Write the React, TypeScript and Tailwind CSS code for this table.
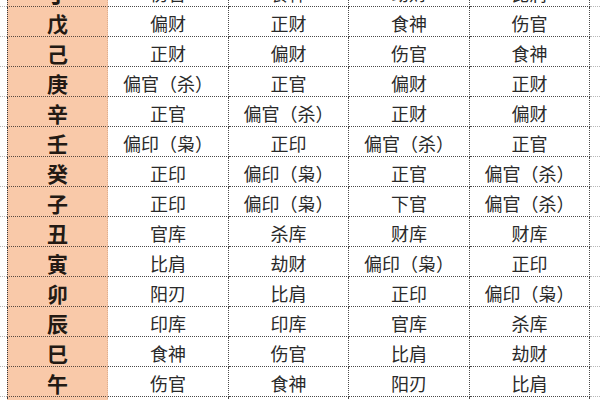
import React from "react";

const rows: [string, string, string, string, string][] = [
  ["丁", "伤官", "食神", "劫财", "比肩"],
  ["戊", "偏财", "正财", "食神", "伤官"],
  ["己", "正财", "偏财", "伤官", "食神"],
  ["庚", "偏官（杀）", "正官", "偏财", "正财"],
  ["辛", "正官", "偏官（杀）", "正财", "偏财"],
  ["壬", "偏印（枭）", "正印", "偏官（杀）", "正官"],
  ["癸", "正印", "偏印（枭）", "正官", "偏官（杀）"],
  ["子", "正印", "偏印（枭）", "下官", "偏官（杀）"],
  ["丑", "官库", "杀库", "财库", "财库"],
  ["寅", "比肩", "劫财", "偏印（枭）", "正印"],
  ["卯", "阳刃", "比肩", "正印", "偏印（枭）"],
  ["辰", "印库", "印库", "官库", "杀库"],
  ["巳", "食神", "伤官", "比肩", "劫财"],
  ["午", "伤官", "食神", "阳刃", "比肩"],
  ["未", "正财", "偏财", "伤官", "食神"],
];

export default function App() {
  return (
    <div
      className="w-[600px] h-[400px] overflow-hidden bg-white"
      style={{ fontFamily: '"Noto Sans CJK SC", "Noto Sans", sans-serif' }}
    >
      <div className="-mt-[23px] flex flex-col">
        {rows.map((r, i) => (
          <div
            key={i}
            className="grid grid-cols-[7px_101px_121px_120px_121px_120px_10px] h-[30px]"
          >
            <div className="border-b border-dotted border-[#b8b8b8]" />
            <div className="flex items-center justify-center bg-[#f9c9a9] border-l border-l-[#3a3a3a] border-r border-r-[#dcae90] border-b border-b-[#5a4a40] border-dotted text-[21px] font-bold text-[#231a14] leading-none pt-[3px]">
              <span>{r[0]}</span>
            </div>
            {r.slice(1).map((c, j) => (
              <div
                key={j}
                className="flex items-center justify-center border-r border-b border-dotted border-[#4a4a4a] text-[18px] text-[#2a2a2a] leading-none pt-[3px]"
              >
                {c}
              </div>
            ))}
            <div className="border-b border-dotted border-[#b8b8b8]" />
          </div>
        ))}
      </div>
    </div>
  );
}
